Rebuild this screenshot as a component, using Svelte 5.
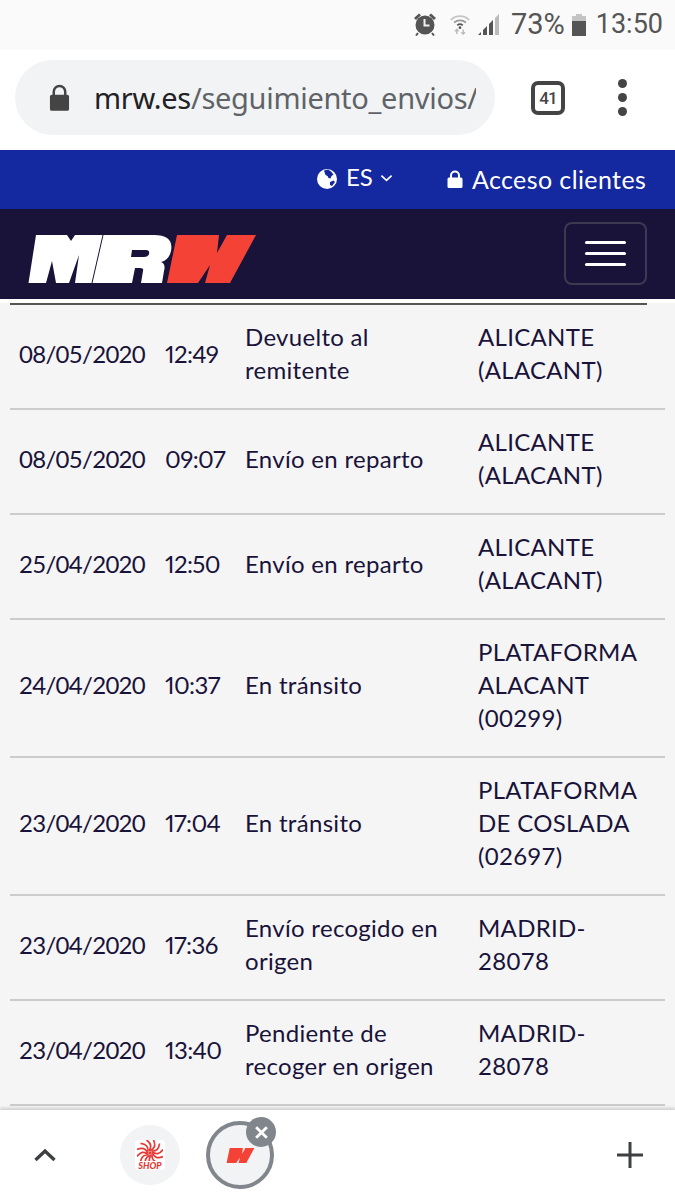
<script>
  const rows = [
    { date: "08/05/2020", time: "12:49", status: ["Devuelto al", "remitente"], place: ["ALICANTE", "(ALACANT)"] },
    { date: "08/05/2020", time: "09:07", status: ["Envío en reparto"], place: ["ALICANTE", "(ALACANT)"] },
    { date: "25/04/2020", time: "12:50", status: ["Envío en reparto"], place: ["ALICANTE", "(ALACANT)"] },
    { date: "24/04/2020", time: "10:37", status: ["En tránsito"], place: ["PLATAFORMA", "ALACANT", "(00299)"] },
    { date: "23/04/2020", time: "17:04", status: ["En tránsito"], place: ["PLATAFORMA", "DE COSLADA", "(02697)"] },
    { date: "23/04/2020", time: "17:36", status: ["Envío recogido en", "origen"], place: ["MADRID-", "28078"] },
    { date: "23/04/2020", time: "13:40", status: ["Pendiente de", "recoger en origen"], place: ["MADRID-", "28078"] }
  ]
  // blades of the little shop swirl
  const blades = Array.from({ length: 12 }, (_, i) => i * 30)
</script>

<div class="phone">
  <!-- Android status bar -->
  <div class="statusbar">
    <svg class="alarm" viewBox="0 0 24 24" width="24" height="24">
      <circle cx="12" cy="13" r="9.500" fill="#555"/>
      <path d="M1 6 L6 1.500 L8 3.200 L3 8Z M23 6 L18 1.500 L16 3.200 L21 8Z" fill="#555"/>
      <path d="M11.500 7v6.500h5" fill="none" stroke="#f2f2f2" stroke-width="2"/>
      <path d="M5 21l-2 2.500M19 21l2 2.500" stroke="#555" stroke-width="2"/>
    </svg>
    <svg class="wifi" viewBox="0 0 22 24" width="20" height="22">
      <path d="M1 7.500C6.500 2 15.500 2 21 7.500" fill="none" stroke="#c4c4c4" stroke-width="2"/>
      <path d="M4.500 10.500C8 7.200 14 7.200 17.500 10.500" fill="none" stroke="#999" stroke-width="2"/>
      <path d="M8 13.500C9.700 12 12.300 12 14 13.500" fill="none" stroke="#555" stroke-width="2"/>
      <circle cx="11" cy="16" r="1.500" fill="#555"/>
      <path d="M7.500 18v5M5.500 20l2-2.200 2 2.200M14.500 23v-5M12.500 21l2 2 2-2" fill="none" stroke="#bbb" stroke-width="1.600"/>
    </svg>
    <svg class="signal" viewBox="0 0 24 24" width="24" height="24">
      <path d="M1 23l3-3v3z" fill="#555"/>
      <path d="M6 23v-5l4-4v9zM12 23V12l4-4v15z" fill="#555"/>
      <path d="M18 23V6l4-4v21z" fill="#bbb"/>
    </svg>
    <span class="pct">73%</span>
    <svg class="battery" viewBox="0 0 16 24" width="16" height="24">
      <path d="M5 2h6v2h4v20H1V4h4z" fill="#c4c4c4"/>
      <path d="M1 9h14v15H1z" fill="#555"/>
    </svg>
    <span class="clock">13:50</span>
  </div>

  <!-- Browser toolbar -->
  <div class="toolbar">
    <div class="urlbar">
      <svg class="lock" viewBox="0 0 22 28" width="21" height="27">
        <path d="M5 12V8a6 6 0 0 1 12 0v4" fill="none" stroke="#444" stroke-width="2.600"/>
        <rect x="1" y="11" width="20" height="17" rx="2" fill="#444"/>
      </svg>
      <div class="url"><b>mrw.es</b>/seguimiento_envios/</div>
    </div>
    <div class="tabs">41</div>
    <div class="dots"><i></i><i></i><i></i></div>
  </div>

  <!-- Site header -->
  <div class="topbar">
    <svg class="globe" viewBox="0 0 20 20" width="20" height="20">
      <circle cx="10" cy="10" r="10" fill="#fff"/>
      <path d="M7 1.500l4-1 3 2 2.500 3-2 1.500-1 2.500-2-.5-1-2-2-1zM13 13l3.500-1.500 1.500 1.500-3 4-2-1z" fill="#1428a0"/>
    </svg>
    <span class="lang">ES</span>
    <svg class="chev" viewBox="0 0 14 8" width="13" height="8">
      <path d="M1.500 1.500L7 6.500l5.500-5" fill="none" stroke="#fff" stroke-width="1.800"/>
    </svg>
    <svg class="padlock" viewBox="0 0 16 18" width="16" height="18">
      <path d="M4 8V5.500a4 4 0 0 1 8 0V8" fill="none" stroke="#fff" stroke-width="2"/>
      <rect x="0.500" y="7.500" width="15" height="10.500" rx="1.500" fill="#fff"/>
    </svg>
    <span class="access">Acceso clientes</span>
  </div>

  <div class="navbar">
    <svg class="logo" viewBox="0 0 228 48" width="228" height="48">
      <path fill="#fff" d="M0.500 48 L8 0 H39 L43 6 L47 0 H74.500 L63.500 48 H47 L51 20 L41 48 H28 L24 26 L18 48Z"/>
      <path fill="#fff" fill-rule="evenodd" d="M75.500 0 H126 Q146 0 143 16 Q141 25 133 27 Q138 29 136 36 L134 48 H113 L115 36 Q116 33 112 33 H107 L104 48 H64.500Z M104 15 H118 Q122 15 121 19 Q120 22 116 22 H103Z"/>
      <path fill="#f44336" d="M139 48 L149 0 H191 L189 18 L199 0 H228 L202 48 H177 L182 30 L170 48Z"/>
    </svg>
    <div class="burger"><i></i><i></i><i></i></div>
  </div>

  <!-- Tracking table -->
  <div class="content">
    <div class="head-line"></div>
    {#each rows as r}
      <div class="row">
        <div class="date">{r.date}</div>
        <div class="time">{r.time}</div>
        <div>{#each r.status as l}<div>{l}</div>{/each}</div>
        <div>{#each r.place as l}<div>{l}</div>{/each}</div>
      </div>
    {/each}
  </div>

  <!-- Browser bottom bar -->
  <div class="bottombar">
    <svg class="up" viewBox="0 0 24 14" width="24" height="14">
      <path d="M2.500 12L12 3l9.500 9" fill="none" stroke="#3c4043" stroke-width="3.400"/>
    </svg>
    <div class="tab-shop">
      <div class="shop-icon">
        <svg viewBox="-13 -13 26 21" width="26" height="21">
          {#each blades as a}
            <path d="M0-2.500Q7-5 3.500-13" fill="none" stroke="#e53935" stroke-width="1.700" transform="rotate({a})"/>
          {/each}
          <circle r="1.800" fill="#e53935"/>
        </svg>
        <span>SHOP</span>
      </div>
    </div>
    <div class="tab-mrw">
      <svg viewBox="138 0 91 48" width="29" height="15">
        <path fill="#f44336" d="M139 48 L149 0 H191 L189 18 L199 0 H228 L202 48 H177 L182 30 L170 48Z"/>
      </svg>
      <div class="close">
        <svg viewBox="0 0 14 14" width="15" height="15">
          <path d="M2 2l10 10M12 2L2 12" stroke="#fff" stroke-width="2.600"/>
        </svg>
      </div>
    </div>
    <svg class="plus" viewBox="0 0 26 26" width="26" height="26">
      <path d="M13 0v26M0 13h26" stroke="#3c4043" stroke-width="3"/>
    </svg>
  </div>
</div>

<style>
  :global(body) {
    margin: 0;
    background: #fff;
  }
  .phone {
    width: 675px;
    height: 1200px;
    display: flex;
    flex-direction: column;
    overflow: hidden;
    position: relative;
    font-family: Lato, sans-serif;
  }
  .statusbar {
    height: 50px;
    display: flex;
    align-items: center;
    justify-content: flex-end;
    padding-right: 12px;
    padding-bottom: 2px;
    box-sizing: border-box;
    background: #fafafa;
    color: #555;
    font-family: Roboto, sans-serif;
    font-size: 27px;
  }
  .pct { font-size: 29px; }
  .alarm { margin-right: 13px; }
  .wifi { margin-right: 7px; }
  .signal { margin-right: 10px; }
  .battery { margin: 0 9px 0 6px; }
  .toolbar {
    height: 100px;
    display: flex;
    align-items: center;
    padding-left: 15px;
    padding-bottom: 5px;
    box-sizing: border-box;
    background: #fff;
  }
  .urlbar {
    width: 480px;
    height: 75px;
    border-radius: 38px;
    background: #f1f3f4;
    display: flex;
    align-items: center;
    padding-left: 34px;
    box-sizing: border-box;
  }
  .lock { margin-right: 24px; }
  .url {
    width: 382px;
    overflow: hidden;
    white-space: nowrap;
    font-family: "Noto Sans", sans-serif;
    font-size: 29px;
    letter-spacing: -0.3px;
    color: #5f6368;
  }
  .url b {
    font-weight: 400;
    color: #202124;
  }
  .tabs {
    width: 26px;
    height: 26px;
    margin-left: 36px;
    border: 4px solid #444;
    border-radius: 7px;
    display: flex;
    align-items: center;
    justify-content: center;
    font-family: Roboto, sans-serif;
    font-weight: 500;
    font-size: 17px;
    letter-spacing: -0.8px;
    color: #444;
  }
  .dots {
    margin-left: 53px;
    display: flex;
    flex-direction: column;
    gap: 5px;
  }
  .dots i {
    width: 9px;
    height: 9px;
    border-radius: 50%;
    background: #444;
  }
  .topbar {
    height: 59px;
    display: flex;
    align-items: center;
    background: #1428a0;
    color: #fff;
    font-size: 24px;
    padding-left: 317px;
    padding-bottom: 2px;
    box-sizing: border-box;
  }
  .lang { margin: 0 0 4px 9px; }
  .chev { margin: 0 0 2px 7px; }
  .padlock { margin-left: 54px; }
  .access { margin-left: 9px; font-size: 25px; letter-spacing: 0.4px; }
  .navbar {
    height: 90px;
    flex: none;
    display: flex;
    align-items: center;
    justify-content: space-between;
    padding: 0 28px 0 28px;
    box-sizing: border-box;
    background: #191339;
  }
  .logo { margin-top: 10px; }
  .burger {
    width: 83px;
    height: 63px;
    box-sizing: border-box;
    border: 2px solid #3c3a50;
    border-radius: 8px;
    margin-bottom: 2px;
    display: flex;
    flex-direction: column;
    align-items: center;
    justify-content: center;
    gap: 8px;
  }
  .burger i {
    width: 41px;
    height: 3px;
    border-radius: 2px;
    background: #fff;
  }
  .content {
    flex: 1;
    min-height: 0;
    overflow: hidden;
    background: #f5f5f6;
    border-top: 4px solid #fff;
    color: #191339;
    font-size: 24px;
    line-height: 33px;
    letter-spacing: 0.3px;
  }
  .head-line {
    height: 2px;
    margin: 0 28px 0 10px;
    background: #555;
  }
  .row {
    margin: 0 10px;
    padding: 15px 0 22px 9px;
    display: grid;
    grid-template-columns: 146px 80px 233px 1fr;
    align-items: center;
    border-bottom: 2px solid #ccc;
  }
  .date { letter-spacing: -0.7px; }
  .time {
    letter-spacing: -0.6px;
    font-variant-numeric: proportional-nums;
  }
  .bottombar {
    height: 90px;
    flex: none;
    display: flex;
    align-items: center;
    background: #fff;
    box-shadow: 0 -2px 3px rgba(0, 0, 0, 0.16);
    position: relative;
    padding-left: 33px;
    box-sizing: border-box;
  }
  .tab-shop {
    width: 60px;
    height: 60px;
    margin-left: 63px;
    border-radius: 50%;
    background: #f1f3f4;
    display: flex;
    align-items: center;
    justify-content: center;
  }
  .shop-icon {
    width: 30px;
    height: 30px;
    background: #fff;
    border-radius: 4px;
    display: flex;
    flex-direction: column;
    align-items: center;
    line-height: 9px;
    font-size: 9px;
    font-weight: 900;
    font-style: italic;
    color: #e53935;
  }
  .tab-mrw {
    width: 68px;
    height: 68px;
    margin-left: 26px;
    box-sizing: border-box;
    border: 4px solid #80868b;
    border-radius: 50%;
    background: #f1f3f4;
    display: flex;
    align-items: center;
    justify-content: center;
    position: relative;
  }
  .close {
    position: absolute;
    top: -8px;
    right: -6px;
    width: 30px;
    height: 30px;
    border-radius: 50%;
    background: #80868b;
    display: flex;
    align-items: center;
    justify-content: center;
  }
  .plus {
    margin-left: auto;
    margin-right: 32px;
  }
</style>
